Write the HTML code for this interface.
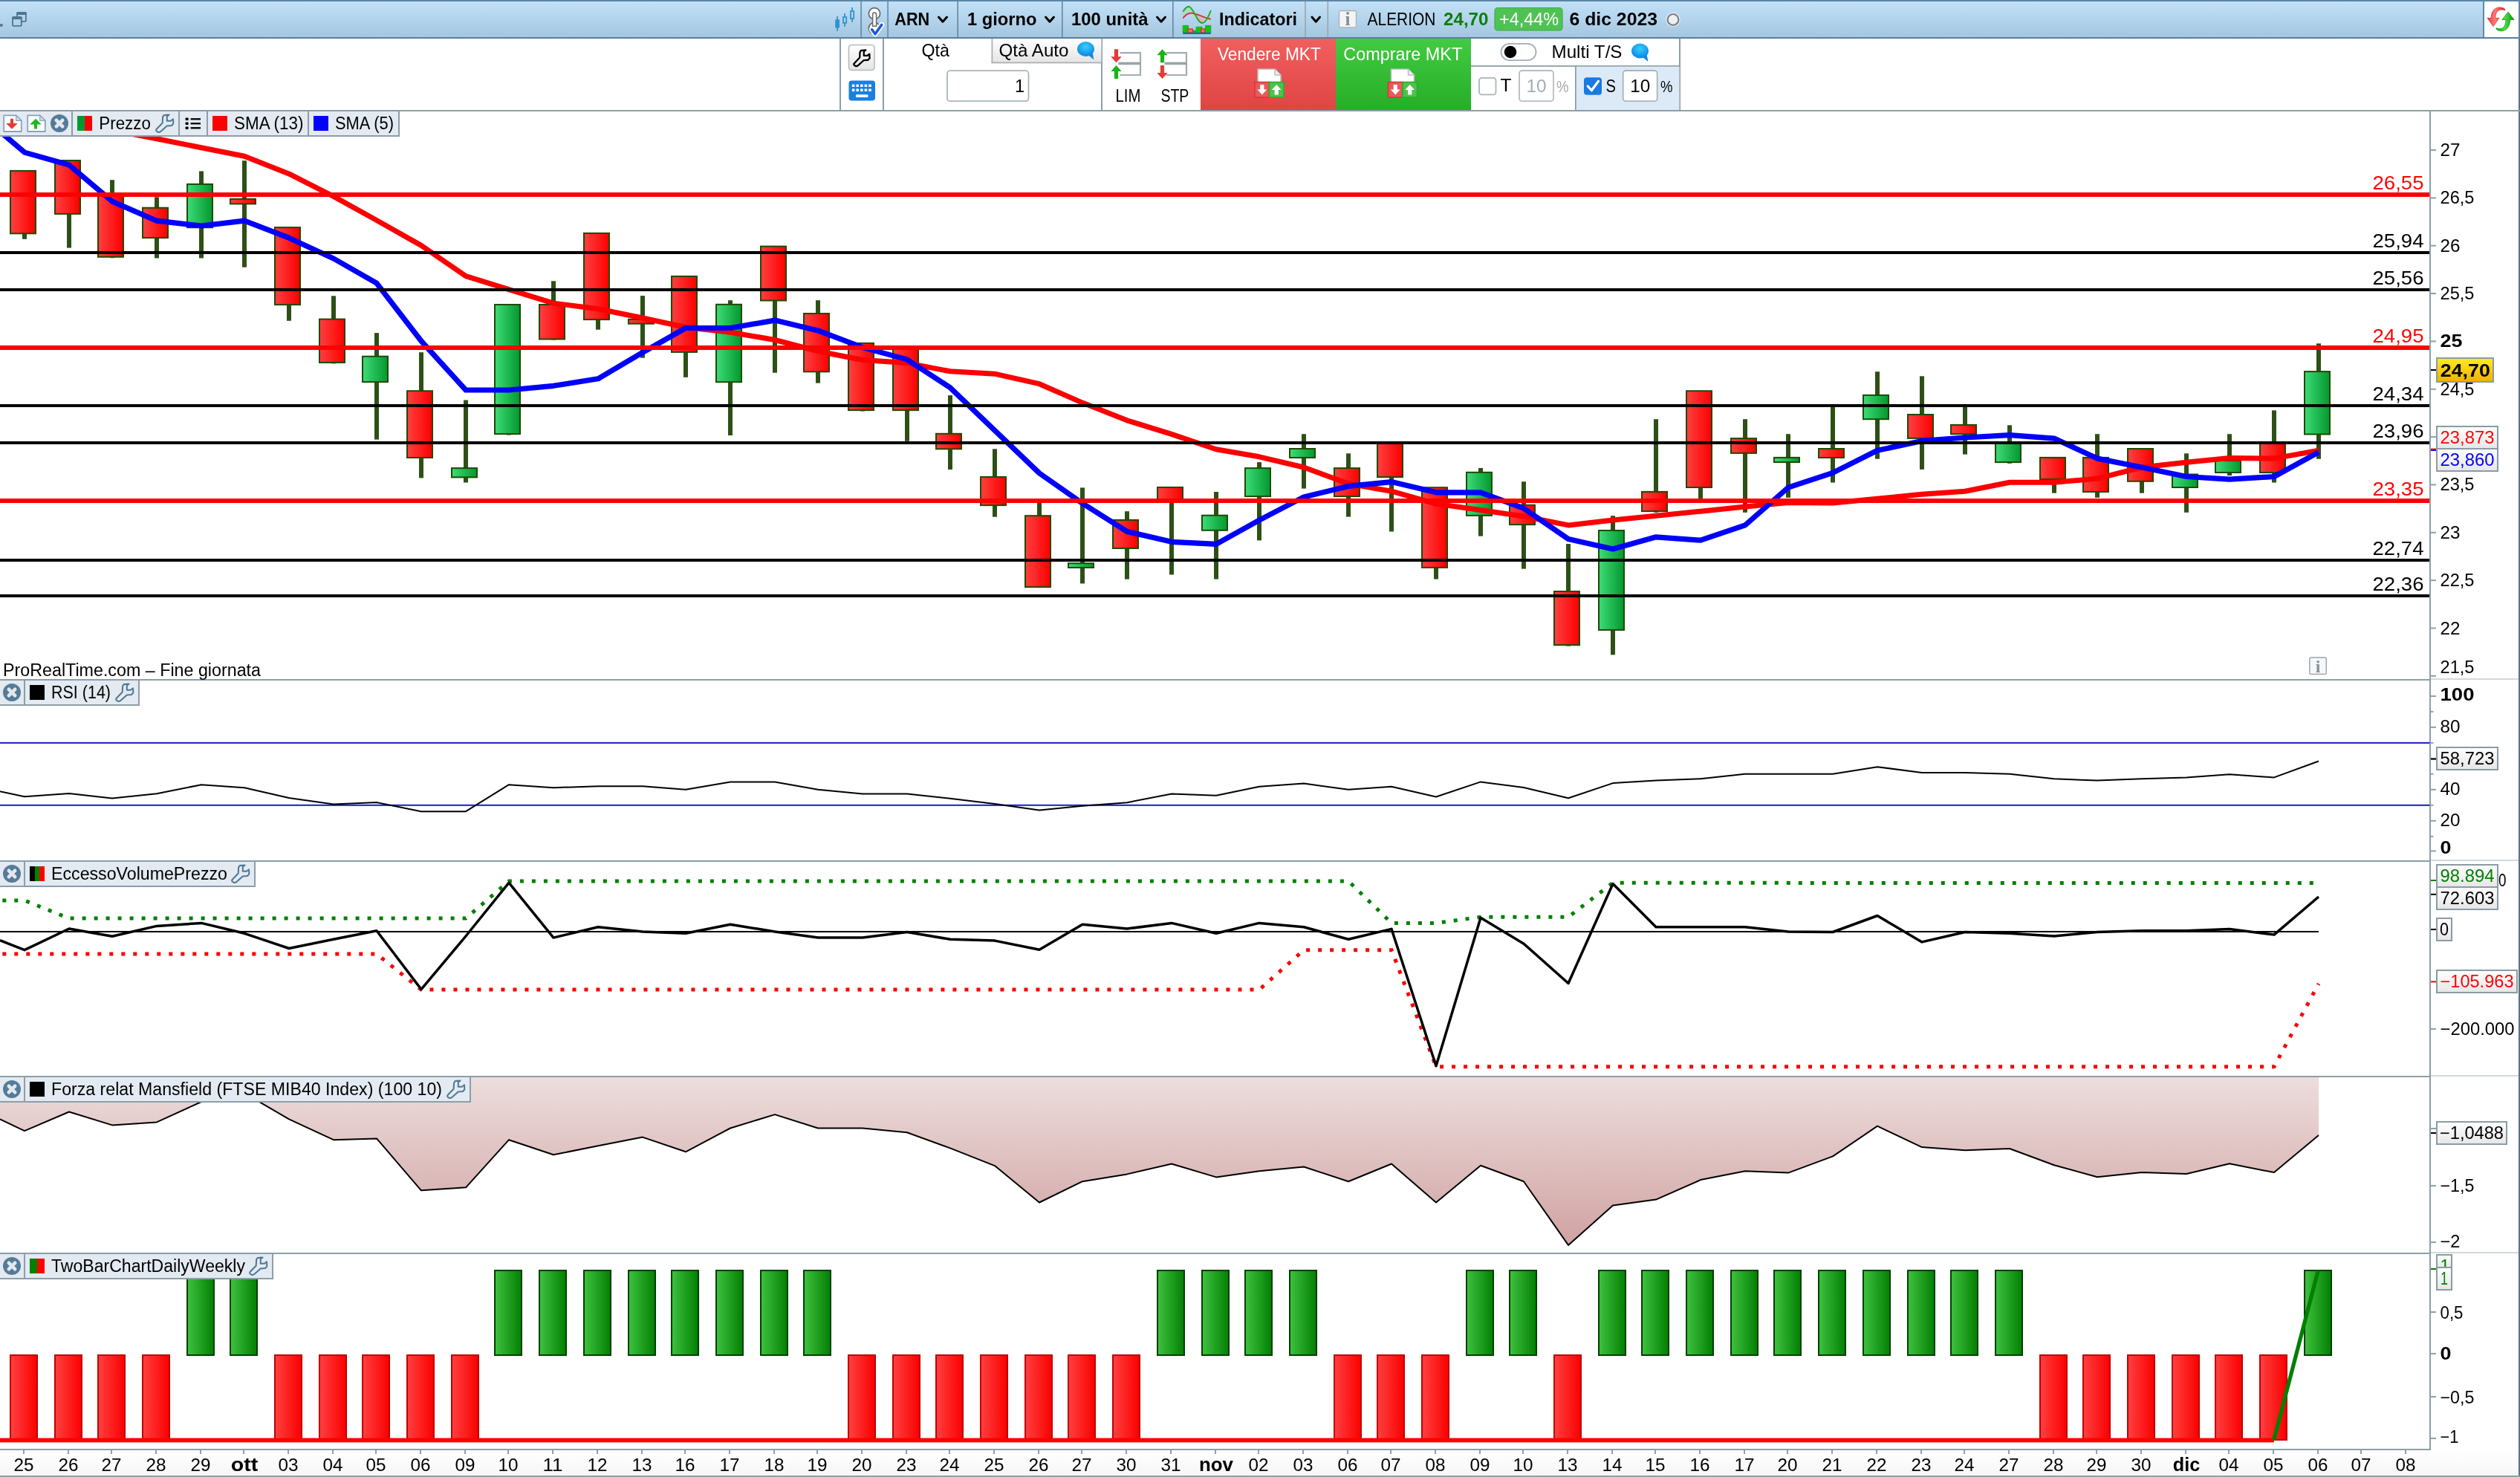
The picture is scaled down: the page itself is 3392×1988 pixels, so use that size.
<!DOCTYPE html>
<html><head><meta charset="utf-8"><title>ARN chart</title>
<style>html,body{margin:0;padding:0;background:#fff}body{width:3392px;height:1988px}svg{display:block;will-change:transform;opacity:0.9999}</style></head>
<body><svg width="3392" height="1988" viewBox="0 0 3392 1988" font-family="Liberation Sans, sans-serif">
<defs>
<linearGradient id="gTop" x1="0" y1="0" x2="0" y2="1"><stop offset="0" stop-color="#c3e2f9"/><stop offset="1" stop-color="#a3c5de"/></linearGradient>
<linearGradient id="gR" x1="0" y1="0" x2="1" y2="0"><stop offset="0" stop-color="#ff4040"/><stop offset="1" stop-color="#fc0000"/></linearGradient>
<linearGradient id="gG" x1="0" y1="0" x2="1" y2="0"><stop offset="0" stop-color="#3ddc78"/><stop offset="1" stop-color="#04972f"/></linearGradient>
<linearGradient id="gBR" x1="0" y1="0" x2="1" y2="0"><stop offset="0" stop-color="#ff4040"/><stop offset="1" stop-color="#fa0000"/></linearGradient>
<linearGradient id="gBG" x1="0" y1="0" x2="1" y2="0"><stop offset="0" stop-color="#3ec23e"/><stop offset="1" stop-color="#037f03"/></linearGradient>
<linearGradient id="gM" gradientUnits="userSpaceOnUse" x1="0" y1="1450" x2="0" y2="1686"><stop offset="0" stop-color="#ecdddd"/><stop offset="1" stop-color="#cfa09f"/></linearGradient>
<linearGradient id="gSell" x1="0" y1="0" x2="0" y2="1"><stop offset="0" stop-color="#f15f5f"/><stop offset="1" stop-color="#df4444"/></linearGradient>
<linearGradient id="gBuy" x1="0" y1="0" x2="0" y2="1"><stop offset="0" stop-color="#42cb42"/><stop offset="1" stop-color="#27ad27"/></linearGradient>
<linearGradient id="gGold" x1="0" y1="0" x2="0" y2="1"><stop offset="0" stop-color="#ffec20"/><stop offset="1" stop-color="#f0b000"/></linearGradient>
<linearGradient id="gLbl" x1="0" y1="0" x2="0" y2="1"><stop offset="0" stop-color="#ffffff"/><stop offset="1" stop-color="#e6e6e8"/></linearGradient>
<linearGradient id="gTab" x1="0" y1="0" x2="0" y2="1"><stop offset="0" stop-color="#ffffff"/><stop offset="1" stop-color="#e4e4e4"/></linearGradient>
<linearGradient id="gBot" x1="0" y1="0" x2="0" y2="1"><stop offset="0" stop-color="#ffffff"/><stop offset="1" stop-color="#f6f6f6"/></linearGradient>
<radialGradient id="gBub" cx="0.5" cy="0.35" r="0.7"><stop offset="0" stop-color="#35d0ff"/><stop offset="1" stop-color="#0a7fe0"/></radialGradient>
<clipPath id="cpMain"><rect x="0" y="150" width="3270" height="765"/></clipPath>
<clipPath id="cpM"><rect x="0" y="1450" width="3270" height="236"/></clipPath>
</defs>
<rect width="3392" height="1988" fill="#fff"/>
<rect x="0" y="0" width="3392" height="52" fill="url(#gTop)"/>
<rect x="0" y="0" width="3392" height="2" fill="#5e86a5"/>
<rect x="0" y="50" width="3392" height="2" fill="#587f9e"/>
<rect x="1158.3" y="2" width="1.6" height="48" fill="#6189a8"/>
<rect x="1194.3" y="2" width="1.6" height="48" fill="#6189a8"/>
<rect x="1288.4" y="2" width="1.6" height="48" fill="#6189a8"/>
<rect x="1429" y="2" width="1.6" height="48" fill="#6189a8"/>
<rect x="1578" y="2" width="1.6" height="48" fill="#6189a8"/>
<rect x="1756.2" y="2" width="1.6" height="48" fill="#9ba5ab"/>
<rect x="1786.5" y="2" width="1.6" height="48" fill="#9ba5ab"/>
<rect x="3342" y="2" width="2" height="48" fill="#6189a8"/>
<rect x="3344" y="2" width="46" height="48" fill="#fff"/>
<rect x="3390" y="0" width="2" height="1988" fill="#5f7283"/>
<rect x="3390" y="0" width="2" height="52" fill="#5e86a5"/>
<linearGradient id="gRA" x1="0" y1="0" x2="1" y2="0"><stop offset="0" stop-color="#f23c3c"/><stop offset="0.45" stop-color="#ff7878"/><stop offset="1" stop-color="#d82424"/></linearGradient><linearGradient id="gGA" x1="0" y1="0" x2="1" y2="0"><stop offset="0" stop-color="#10b810"/><stop offset="0.5" stop-color="#48e048"/><stop offset="1" stop-color="#089008"/></linearGradient>
<path d="M3353.1 24.3 C3353.3 15 3358 9.6 3365.5 9.9 C3368 10 3370.5 11 3371.9 12.6 L3371.8 13.8 C3369 12.8 3366.5 12.8 3364.5 13.4 C3360.5 14.8 3358.9 19 3358.8 24.3 L3363.8 24.3 L3356 35.6 L3348 24.3 Z" fill="url(#gRA)" stroke="#c02626" stroke-width="0.7"/>
<path d="M3378.7 26.5 C3378.5 36 3373.5 41.8 3366.5 41.8 C3364 41.7 3361.5 40.6 3359.9 39 L3360.1 37.8 C3362.8 38.8 3365.2 38.9 3367.3 38.3 C3371.2 37 3372.9 32 3373 26.5 L3367.9 26.5 L3376.1 16.1 L3384 26.5 Z" fill="url(#gGA)" stroke="#0a8a0a" stroke-width="0.7"/>
<rect x="-2" y="32.2" width="6" height="3.5" rx="1.7" fill="#4f7591"/>
<rect x="23.1" y="17" width="11.8" height="11.8" rx="1.6" fill="none" stroke="#4f7591" stroke-width="1.8"/><rect x="22.2" y="16.1" width="13.6" height="3.8" rx="1.4" fill="#4f7591"/>
<rect x="17" y="23.1" width="11.8" height="11.8" rx="1.6" fill="#b1d3ea" stroke="#4f7591" stroke-width="1.8"/><rect x="16.1" y="22.2" width="13.6" height="3.8" rx="1.4" fill="#4f7591"/>
<g fill="#3391cf" stroke="none"><rect x="1124.2" y="26.2" width="5.8" height="11.3"/><rect x="1126.2" y="22.1" width="1.8" height="19.6"/><rect x="1136.2" y="18.1" width="1.8" height="4.5"/><rect x="1136.2" y="31.2" width="1.8" height="4.6"/><rect x="1146.2" y="10" width="1.8" height="4.6"/><rect x="1146.2" y="25.4" width="1.8" height="4.4"/></g>
<g fill="none" stroke="#3391cf" stroke-width="1.8"><rect x="1135" y="23" width="4.2" height="7.8"/><rect x="1145" y="15" width="4.2" height="10"/></g>
<g stroke="#6d6d6d" stroke-width="1.8" fill="#fff"><circle cx="1177" cy="18.3" r="7.6"/><circle cx="1177" cy="38" r="7.6"/></g>
<path d="M1174.6 35.2 V19.5 a2.5 2.5 0 0 1 5 0 V35.2 Z" fill="#fff" stroke="#6d6d6d" stroke-width="1.6"/>
<path d="M1173.6 39.8 L1178 45.8 L1186.8 33.4" fill="none" stroke="#fff" stroke-width="7" stroke-linecap="round" stroke-linejoin="round"/>
<path d="M1173.6 39.8 L1178 45.8 L1186.8 33.4" fill="none" stroke="#1f5bd8" stroke-width="3.6" stroke-linecap="round" stroke-linejoin="round"/>
<text x="1204.3" y="33.9" font-size="24.6" font-weight="bold" fill="#000" text-anchor="start" textLength="47" lengthAdjust="spacingAndGlyphs" >ARN</text>
<path d="M1263.5 23 L1269.0 29.2 L1274.5 23" fill="none" stroke="#000" stroke-width="3" stroke-linecap="round" stroke-linejoin="round"/>
<text x="1301.9" y="33.9" font-size="24.6" font-weight="bold" fill="#000" text-anchor="start" textLength="93.5" lengthAdjust="spacingAndGlyphs" >1 giorno</text>
<path d="M1407.5 23 L1413.0 29.2 L1418.5 23" fill="none" stroke="#000" stroke-width="3" stroke-linecap="round" stroke-linejoin="round"/>
<text x="1442" y="33.9" font-size="24.6" font-weight="bold" fill="#000" text-anchor="start" textLength="103.5" lengthAdjust="spacingAndGlyphs" >100 unità</text>
<path d="M1557.5 23 L1563.0 29.2 L1568.5 23" fill="none" stroke="#000" stroke-width="3" stroke-linecap="round" stroke-linejoin="round"/>
<path d="M1592.2 15.7 C1595 11.5 1597.5 8.7 1600.1 8.7 C1606 8.7 1611 31 1618.4 31 C1622.5 31 1626.5 23 1629.8 14 L1629.8 25.8 C1620 23.5 1611 18.3 1604 17.6 C1600 17.2 1596 19.5 1592.2 24.5 Z" fill="#a9d9c4" opacity="0.9"/>
<path d="M1606.5 18 C1611 19 1616 22 1623.5 24.3 C1621.5 28 1620 31 1618.4 31 C1613.5 31 1610 22 1606.5 18 Z" fill="#d6b9c6"/>
<path d="M1592.2 24.5 C1596 19.5 1600 17.2 1604 17.6 C1611 18.3 1620 23.5 1629.8 25.8" fill="none" stroke="#d62b2b" stroke-width="1.8"/>
<path d="M1592.2 15.7 C1595 11.5 1597.5 8.7 1600.1 8.7 C1606 8.7 1611 31 1618.4 31 C1622.5 31 1626.5 23 1629.8 14" fill="none" stroke="#1cad1c" stroke-width="1.9"/>
<g><rect x="1592.2" y="34.3" width="7.4" height="9.6" fill="#08c808" stroke="#1aa81a" stroke-width="0.8"/><rect x="1604.5" y="40.6" width="6" height="3.3" fill="#12b012"/><rect x="1610.1" y="36.2" width="7.9" height="7.7" fill="#08c808" stroke="#1aa81a" stroke-width="0.8"/><rect x="1622.4" y="34.3" width="7.4" height="9.6" fill="#08c808" stroke="#1aa81a" stroke-width="0.8"/><rect x="1598.9" y="38.9" width="6.4" height="5" fill="#ff6a6a" stroke="#d82828" stroke-width="1.2"/><rect x="1616.8" y="38.9" width="5" height="5" fill="#ff6a6a" stroke="#d82828" stroke-width="1.2"/><rect x="1592.2" y="43.9" width="37.6" height="2" fill="#1a57d6"/></g>
<text x="1641" y="33.9" font-size="24.6" font-weight="bold" fill="#000" text-anchor="start" textLength="105" lengthAdjust="spacingAndGlyphs" >Indicatori</text>
<path d="M1766.0 23 L1771.25 29.2 L1776.5 23" fill="none" stroke="#000" stroke-width="3" stroke-linecap="round" stroke-linejoin="round"/>
<rect x="1802.5" y="14.5" width="23" height="22.5" rx="2" fill="#f4f4f4" stroke="#a9b4ba" stroke-width="1.4"/>
<text x="1814" y="33.8" font-size="25" font-weight="bold" fill="#868c93" text-anchor="middle" font-family="Liberation Serif, serif">i</text>
<text x="1840.5" y="33.9" font-size="24.6" fill="#000" text-anchor="start" textLength="92" lengthAdjust="spacingAndGlyphs" >ALERION</text>
<text x="1943" y="33.9" font-size="24.6" font-weight="bold" fill="#0d7d0d" text-anchor="start" textLength="60.5" lengthAdjust="spacingAndGlyphs" >24,70</text>
<rect x="2012" y="10.5" width="91" height="30.5" rx="4" fill="#4fc254" stroke="#3fae44" stroke-width="1.2"/>
<text x="2018" y="33.9" font-size="24.6" fill="#fff" text-anchor="start" textLength="80" lengthAdjust="spacingAndGlyphs" >+4,44%</text>
<text x="2112.5" y="33.9" font-size="24.6" font-weight="bold" fill="#000" text-anchor="start" textLength="118.5" lengthAdjust="spacingAndGlyphs" >6 dic 2023</text>
<circle cx="2252" cy="26.4" r="9.6" fill="#e9f1f8"/><circle cx="2252" cy="26.4" r="7.4" fill="#eaf0f6" stroke="#7f7f7f" stroke-width="2.2"/>
<rect x="0" y="148" width="3392" height="2" fill="#8d9ea6"/>
<rect x="1130" y="52" width="2" height="97" fill="#8d9ea6"/>
<rect x="1188" y="52" width="2" height="97" fill="#8d9ea6"/>
<rect x="1482" y="52" width="2" height="97" fill="#8d9ea6"/>
<rect x="2260" y="52" width="2" height="97" fill="#8d9ea6"/>
<rect x="1142.5" y="60.5" width="34.5" height="34" rx="4" fill="url(#gTab)" stroke="#b3bcc1" stroke-width="1.6"/>
<g transform="translate(1160.2 78) scale(0.92) translate(-12 -12)"><path d="M0.8 19.8 L8.7 11.5 L9.1 3.4 L10.9 0.9 L17.5 0.6 L14.8 2.4 L14.8 8.7 L19.8 8.7 L23 6.3 L23.3 12.3 L21 15 L14.7 15.4 L6.3 23 Q3.6 25 1.3 23 Q-0.8 21.4 0.8 19.8 Z" fill="none" stroke="#000" stroke-width="2.5" stroke-linejoin="round"/></g>
<rect x="1142.5" y="108.5" width="35.5" height="27" rx="4" fill="#197fe3"/>
<rect x="1146.8" y="113.5" width="3.6" height="3.6" rx="0.6" fill="#fff"/>
<rect x="1152.3999999999999" y="113.5" width="3.6" height="3.6" rx="0.6" fill="#fff"/>
<rect x="1158.0" y="113.5" width="3.6" height="3.6" rx="0.6" fill="#fff"/>
<rect x="1163.6" y="113.5" width="3.6" height="3.6" rx="0.6" fill="#fff"/>
<rect x="1169.2" y="113.5" width="3.6" height="3.6" rx="0.6" fill="#fff"/>
<rect x="1146.8" y="119.5" width="3.6" height="3.6" rx="0.6" fill="#fff"/>
<rect x="1152.3999999999999" y="119.5" width="3.6" height="3.6" rx="0.6" fill="#fff"/>
<rect x="1158.0" y="119.5" width="3.6" height="3.6" rx="0.6" fill="#fff"/>
<rect x="1163.6" y="119.5" width="3.6" height="3.6" rx="0.6" fill="#fff"/>
<rect x="1169.2" y="119.5" width="3.6" height="3.6" rx="0.6" fill="#fff"/>
<rect x="1152" y="127.3" width="16.5" height="3.6" rx="0.8" fill="#fff"/>
<text x="1240.5" y="76" font-size="24.3" fill="#000" text-anchor="start" textLength="37.5" lengthAdjust="spacingAndGlyphs" >Qtà</text>
<rect x="1335.5" y="52" width="147" height="32.5" fill="url(#gTab)"/>
<rect x="1334.5" y="52" width="1.8" height="33" fill="#a9b2b7"/><rect x="1334.5" y="83.5" width="148" height="1.8" fill="#a9b2b7"/>
<text x="1344.5" y="76" font-size="24.3" fill="#000" text-anchor="start" textLength="94" lengthAdjust="spacingAndGlyphs" >Qtà Auto</text>
<path d="M1465.525 74.625 L1472.425 80.375 L1470.7 71.175 Z" fill="#0f86e6"/>
<ellipse cx="1461.5" cy="66" rx="11.5" ry="9.89" fill="url(#gBub)"/>
<rect x="1275" y="95.2" width="109.5" height="41" rx="4" fill="#fff" stroke="#a9b4ba" stroke-width="1.8"/>
<text x="1379" y="124" font-size="23.5" fill="#000" text-anchor="end" >1</text>
<path d="M1507.5 71.2 H1535.0 V101 H1507.5 M1507.5 85.3 H1535.0" fill="none" stroke="#a2adb3" stroke-width="2.2"/>
<rect x="1505.5" y="83.6" width="30.5" height="3.6" fill="#98a4aa"/>
<path d="M1499.9 66.2 H1505.1 V76.2 H1509.7 L1502.5 84.2 L1495.3 76.2 H1499.9 Z" fill="#e43a3a"/>
<path d="M1502.5 88 L1509.7 96 H1505.1 V106 H1499.9 V96 H1495.3 Z" fill="#16b416"/>
<path d="M1569.5 71.2 H1597.0 V101 H1569.5 M1569.5 85.3 H1597.0" fill="none" stroke="#a2adb3" stroke-width="2.2"/>
<rect x="1567.5" y="83.6" width="30.5" height="3.6" fill="#98a4aa"/>
<path d="M1564.5 66.2 L1571.7 74.2 H1567.1 V84.2 H1561.9 V74.2 H1557.3 Z" fill="#16b416"/>
<path d="M1561.9 88 H1567.1 V98 H1571.7 L1564.5 106 L1557.3 98 H1561.9 Z" fill="#e43a3a"/>
<text x="1501.5" y="137.3" font-size="23" fill="#000" text-anchor="start" textLength="34" lengthAdjust="spacingAndGlyphs" >LIM</text>
<text x="1562.4" y="137.3" font-size="23" fill="#000" text-anchor="start" textLength="38" lengthAdjust="spacingAndGlyphs" >STP</text>
<rect x="1616" y="52" width="182" height="96" fill="url(#gSell)"/>
<rect x="1798" y="52" width="182" height="96" fill="url(#gBuy)"/>
<text x="1638.9" y="80.5" font-size="24.8" fill="#fff" text-anchor="start" textLength="139" lengthAdjust="spacingAndGlyphs" >Vendere MKT</text>
<text x="1808.3" y="80.5" font-size="24.8" fill="#fff" text-anchor="start" textLength="160" lengthAdjust="spacingAndGlyphs" >Comprare MKT</text>
<path d="M1693 93 H1716 L1724 101 V116 H1693 Z" fill="#fff" stroke="#b6bcc2" stroke-width="1.6"/>
<path d="M1716 93 V101 H1724" fill="#e9edf0" stroke="#b6bcc2" stroke-width="1.4"/>
<rect x="1689" y="110.5" width="19.5" height="20.5" fill="#e85a5a" stroke="#e03535" stroke-width="1.6"/>
<rect x="1708.5" y="110.5" width="19.5" height="20.5" fill="#4cc24c" stroke="#27b027" stroke-width="1.6"/>
<path d="M1696.2 114 H1701.4 V120.5 H1705.2 L1698.8 127.5 L1692.4 120.5 H1696.2 Z" fill="#fff"/>
<path d="M1718.2 114 L1724.6 121 H1720.8 V127.5 H1715.6 V121 H1711.8 Z" fill="#fff"/>
<path d="M1872.5 93 H1895.5 L1903.5 101 V116 H1872.5 Z" fill="#fff" stroke="#b6bcc2" stroke-width="1.6"/>
<path d="M1895.5 93 V101 H1903.5" fill="#e9edf0" stroke="#b6bcc2" stroke-width="1.4"/>
<rect x="1868.5" y="110.5" width="19.5" height="20.5" fill="#e85a5a" stroke="#e03535" stroke-width="1.6"/>
<rect x="1888.0" y="110.5" width="19.5" height="20.5" fill="#4cc24c" stroke="#27b027" stroke-width="1.6"/>
<path d="M1875.7 114 H1880.9 V120.5 H1884.7 L1878.3 127.5 L1871.9 120.5 H1875.7 Z" fill="#fff"/>
<path d="M1897.7 114 L1904.1 121 H1900.3 V127.5 H1895.1 V121 H1891.3 Z" fill="#fff"/>
<rect x="1980" y="88" width="281" height="1.8" fill="#8d9ea6"/>
<rect x="2121.5" y="89.8" width="139" height="58.2" fill="#dceaf8"/>
<rect x="2120" y="89" width="1.8" height="59" fill="#8d9ea6"/>
<rect x="2020.5" y="58.8" width="47" height="22.4" rx="11.2" fill="#fff" stroke="#a3aeb4" stroke-width="1.8"/>
<circle cx="2033" cy="70" r="8.3" fill="#000"/>
<text x="2088.5" y="78" font-size="24.3" fill="#000" text-anchor="start" textLength="95" lengthAdjust="spacingAndGlyphs" >Multi T/S</text>
<path d="M2211.525 77.125 L2218.425 82.875 L2216.7 73.675 Z" fill="#0f86e6"/>
<ellipse cx="2207.5" cy="68.5" rx="11.5" ry="9.89" fill="url(#gBub)"/>
<rect x="1991" y="104.8" width="22.5" height="22.5" rx="3.5" fill="#fff" stroke="#a9b4ba" stroke-width="1.8"/>
<text x="2019.5" y="123.2" font-size="23.5" fill="#000" text-anchor="start" textLength="15" lengthAdjust="spacingAndGlyphs" >T</text>
<rect x="2045" y="95" width="46" height="41.2" rx="4" fill="#fff" stroke="#b4bdc2" stroke-width="1.8"/>
<text x="2068" y="124.2" font-size="23" fill="#a3adb3" text-anchor="middle" textLength="27" lengthAdjust="spacingAndGlyphs" >10</text>
<text x="2095" y="124.2" font-size="22" fill="#a9a9a9" text-anchor="start" textLength="16.5" lengthAdjust="spacingAndGlyphs" >%</text>
<rect x="2132" y="104.3" width="24" height="23.5" rx="4" fill="#1a79e2"/>
<path d="M2137.2 116 L2142.3 121.7 L2151.5 109.2" fill="none" stroke="#fff" stroke-width="3.2" stroke-linecap="round" stroke-linejoin="round"/>
<text x="2161.5" y="123.8" font-size="24" fill="#000" text-anchor="start" textLength="13.5" lengthAdjust="spacingAndGlyphs" >S</text>
<rect x="2184.7" y="95" width="46" height="41.2" rx="4" fill="#fff" stroke="#a9b4ba" stroke-width="1.8"/>
<text x="2207.7" y="124.2" font-size="23" fill="#000" text-anchor="middle" textLength="27" lengthAdjust="spacingAndGlyphs" >10</text>
<text x="2235" y="124.2" font-size="22" fill="#000" text-anchor="start" textLength="16.5" lengthAdjust="spacingAndGlyphs" >%</text>
<rect x="0" y="914" width="3272" height="2" fill="#8d9ea6"/>
<rect x="3272" y="913" width="118" height="2" fill="#d2d9dd"/>
<rect x="0" y="1158" width="3272" height="2" fill="#8d9ea6"/>
<rect x="3272" y="1157" width="118" height="2" fill="#d2d9dd"/>
<rect x="0" y="1448" width="3272" height="2" fill="#8d9ea6"/>
<rect x="3272" y="1447" width="118" height="2" fill="#d2d9dd"/>
<rect x="0" y="1686" width="3272" height="2" fill="#8d9ea6"/>
<rect x="3272" y="1685" width="118" height="2" fill="#d2d9dd"/>
<rect x="0" y="1952" width="3390" height="34" fill="url(#gBot)"/>
<rect x="0" y="1950" width="3272" height="2" fill="#8d9ea6"/>
<rect x="0" y="1986" width="3392" height="2" fill="#8d9ea6"/>
<rect x="3270" y="150" width="2" height="1802" fill="#8d9ea6"/>
<g clip-path="url(#cpMain)">
<rect x="30.0" y="229.7" width="6" height="92.1" fill="#2d5016"/>
<rect x="14.0" y="229.9" width="34" height="84.4" fill="url(#gR)" stroke="#1f4a02" stroke-width="2"/>
<rect x="90.0" y="215.8" width="6" height="117.8" fill="#2d5016"/>
<rect x="74.0" y="216.0" width="34" height="71.9" fill="url(#gR)" stroke="#1f4a02" stroke-width="2"/>
<rect x="148.0" y="242.2" width="6" height="105.0" fill="#2d5016"/>
<rect x="132.0" y="263.8" width="34" height="82.0" fill="url(#gR)" stroke="#1f4a02" stroke-width="2"/>
<rect x="208.0" y="265.3" width="6" height="82.2" fill="#2d5016"/>
<rect x="192.0" y="279.7" width="34" height="40.4" fill="url(#gR)" stroke="#1f4a02" stroke-width="2"/>
<rect x="268.0" y="230.4" width="6" height="117.1" fill="#2d5016"/>
<rect x="252.0" y="247.9" width="34" height="58.3" fill="url(#gG)" stroke="#1f4a02" stroke-width="2"/>
<rect x="326.0" y="216.2" width="6" height="143.5" fill="#2d5016"/>
<rect x="310.0" y="267.8" width="34" height="6.6" fill="url(#gR)" stroke="#1f4a02" stroke-width="2"/>
<rect x="386.0" y="305.9" width="6" height="125.9" fill="#2d5016"/>
<rect x="370.0" y="306.1" width="34" height="104.0" fill="url(#gR)" stroke="#1f4a02" stroke-width="2"/>
<rect x="446.0" y="398.3" width="6" height="91.1" fill="#2d5016"/>
<rect x="430.0" y="429.6" width="34" height="58.4" fill="url(#gR)" stroke="#1f4a02" stroke-width="2"/>
<rect x="504.0" y="448.1" width="6" height="143.5" fill="#2d5016"/>
<rect x="488.0" y="479.7" width="34" height="34.4" fill="url(#gG)" stroke="#1f4a02" stroke-width="2"/>
<rect x="564.0" y="474.2" width="6" height="169.2" fill="#2d5016"/>
<rect x="548.0" y="526.2" width="34" height="89.8" fill="url(#gR)" stroke="#1f4a02" stroke-width="2"/>
<rect x="624.0" y="538.5" width="6" height="111.0" fill="#2d5016"/>
<rect x="608.0" y="630.1" width="34" height="12.3" fill="url(#gG)" stroke="#1f4a02" stroke-width="2"/>
<rect x="682.0" y="409.8" width="6" height="175.7" fill="#2d5016"/>
<rect x="666.0" y="410.0" width="34" height="174.1" fill="url(#gG)" stroke="#1f4a02" stroke-width="2"/>
<rect x="742.0" y="378.3" width="6" height="79.2" fill="#2d5016"/>
<rect x="726.0" y="410.0" width="34" height="46.5" fill="url(#gR)" stroke="#1f4a02" stroke-width="2"/>
<rect x="802.0" y="313.7" width="6" height="130.0" fill="#2d5016"/>
<rect x="786.0" y="313.9" width="34" height="116.2" fill="url(#gR)" stroke="#1f4a02" stroke-width="2"/>
<rect x="862.0" y="398.1" width="6" height="83.6" fill="#2d5016"/>
<rect x="846.0" y="429.8" width="34" height="5.9" fill="url(#gR)" stroke="#1f4a02" stroke-width="2"/>
<rect x="920.0" y="371.7" width="6" height="136.1" fill="#2d5016"/>
<rect x="904.0" y="371.9" width="34" height="102.0" fill="url(#gR)" stroke="#1f4a02" stroke-width="2"/>
<rect x="980.0" y="404.2" width="6" height="181.8" fill="#2d5016"/>
<rect x="964.0" y="409.8" width="34" height="104.4" fill="url(#gG)" stroke="#1f4a02" stroke-width="2"/>
<rect x="1040.0" y="331.4" width="6" height="170.3" fill="#2d5016"/>
<rect x="1024.0" y="331.6" width="34" height="72.9" fill="url(#gR)" stroke="#1f4a02" stroke-width="2"/>
<rect x="1098.0" y="404.2" width="6" height="111.4" fill="#2d5016"/>
<rect x="1082.0" y="422.0" width="34" height="78.3" fill="url(#gR)" stroke="#1f4a02" stroke-width="2"/>
<rect x="1158.0" y="461.7" width="6" height="91.8" fill="#2d5016"/>
<rect x="1142.0" y="461.9" width="34" height="90.2" fill="url(#gR)" stroke="#1f4a02" stroke-width="2"/>
<rect x="1218.0" y="468.2" width="6" height="125.6" fill="#2d5016"/>
<rect x="1202.0" y="468.4" width="34" height="83.7" fill="url(#gR)" stroke="#1f4a02" stroke-width="2"/>
<rect x="1276.0" y="532.1" width="6" height="99.9" fill="#2d5016"/>
<rect x="1260.0" y="583.8" width="34" height="20.5" fill="url(#gR)" stroke="#1f4a02" stroke-width="2"/>
<rect x="1336.0" y="604.3" width="6" height="91.4" fill="#2d5016"/>
<rect x="1320.0" y="642.0" width="34" height="38.1" fill="url(#gR)" stroke="#1f4a02" stroke-width="2"/>
<rect x="1396.0" y="676.0" width="6" height="115.1" fill="#2d5016"/>
<rect x="1380.0" y="694.2" width="34" height="95.9" fill="url(#gR)" stroke="#1f4a02" stroke-width="2"/>
<rect x="1454.0" y="656.4" width="6" height="129.0" fill="#2d5016"/>
<rect x="1438.0" y="758.2" width="34" height="5.8" fill="url(#gG)" stroke="#1f4a02" stroke-width="2"/>
<rect x="1514.0" y="688.2" width="6" height="91.4" fill="#2d5016"/>
<rect x="1498.0" y="699.9" width="34" height="38.1" fill="url(#gR)" stroke="#1f4a02" stroke-width="2"/>
<rect x="1574.0" y="655.7" width="6" height="117.8" fill="#2d5016"/>
<rect x="1558.0" y="655.9" width="34" height="20.1" fill="url(#gR)" stroke="#1f4a02" stroke-width="2"/>
<rect x="1634.0" y="662.0" width="6" height="117.5" fill="#2d5016"/>
<rect x="1618.0" y="693.7" width="34" height="20.1" fill="url(#gG)" stroke="#1f4a02" stroke-width="2"/>
<rect x="1692.0" y="622.1" width="6" height="105.3" fill="#2d5016"/>
<rect x="1676.0" y="630.1" width="34" height="38.0" fill="url(#gG)" stroke="#1f4a02" stroke-width="2"/>
<rect x="1752.0" y="584.2" width="6" height="73.4" fill="#2d5016"/>
<rect x="1736.0" y="604.0" width="34" height="12.0" fill="url(#gG)" stroke="#1f4a02" stroke-width="2"/>
<rect x="1812.0" y="610.3" width="6" height="85.3" fill="#2d5016"/>
<rect x="1796.0" y="630.1" width="34" height="38.0" fill="url(#gR)" stroke="#1f4a02" stroke-width="2"/>
<rect x="1870.0" y="596.0" width="6" height="119.5" fill="#2d5016"/>
<rect x="1854.0" y="596.2" width="34" height="45.9" fill="url(#gR)" stroke="#1f4a02" stroke-width="2"/>
<rect x="1930.0" y="656.0" width="6" height="123.5" fill="#2d5016"/>
<rect x="1914.0" y="656.2" width="34" height="107.7" fill="url(#gR)" stroke="#1f4a02" stroke-width="2"/>
<rect x="1990.0" y="629.9" width="6" height="91.7" fill="#2d5016"/>
<rect x="1974.0" y="635.8" width="34" height="58.1" fill="url(#gG)" stroke="#1f4a02" stroke-width="2"/>
<rect x="2048.0" y="648.2" width="6" height="117.4" fill="#2d5016"/>
<rect x="2032.0" y="679.8" width="34" height="26.3" fill="url(#gR)" stroke="#1f4a02" stroke-width="2"/>
<rect x="2108.0" y="732.1" width="6" height="137.5" fill="#2d5016"/>
<rect x="2092.0" y="796.0" width="34" height="72.2" fill="url(#gR)" stroke="#1f4a02" stroke-width="2"/>
<rect x="2168.0" y="694.2" width="6" height="187.2" fill="#2d5016"/>
<rect x="2152.0" y="714.0" width="34" height="133.9" fill="url(#gG)" stroke="#1f4a02" stroke-width="2"/>
<rect x="2226.0" y="564.2" width="6" height="125.6" fill="#2d5016"/>
<rect x="2210.0" y="661.9" width="34" height="26.2" fill="url(#gR)" stroke="#1f4a02" stroke-width="2"/>
<rect x="2286.0" y="526.0" width="6" height="146.2" fill="#2d5016"/>
<rect x="2270.0" y="526.2" width="34" height="129.8" fill="url(#gR)" stroke="#1f4a02" stroke-width="2"/>
<rect x="2346.0" y="564.2" width="6" height="125.6" fill="#2d5016"/>
<rect x="2330.0" y="590.1" width="34" height="19.8" fill="url(#gR)" stroke="#1f4a02" stroke-width="2"/>
<rect x="2404.0" y="584.2" width="6" height="85.6" fill="#2d5016"/>
<rect x="2388.0" y="615.9" width="34" height="6.2" fill="url(#gG)" stroke="#1f4a02" stroke-width="2"/>
<rect x="2464.0" y="546.9" width="6" height="102.6" fill="#2d5016"/>
<rect x="2448.0" y="604.0" width="34" height="12.0" fill="url(#gR)" stroke="#1f4a02" stroke-width="2"/>
<rect x="2524.0" y="500.2" width="6" height="117.5" fill="#2d5016"/>
<rect x="2508.0" y="531.9" width="34" height="32.3" fill="url(#gG)" stroke="#1f4a02" stroke-width="2"/>
<rect x="2584.0" y="506.3" width="6" height="125.6" fill="#2d5016"/>
<rect x="2568.0" y="558.0" width="34" height="31.9" fill="url(#gR)" stroke="#1f4a02" stroke-width="2"/>
<rect x="2642.0" y="546.9" width="6" height="64.7" fill="#2d5016"/>
<rect x="2626.0" y="571.9" width="34" height="12.3" fill="url(#gR)" stroke="#1f4a02" stroke-width="2"/>
<rect x="2702.0" y="572.3" width="6" height="51.5" fill="#2d5016"/>
<rect x="2686.0" y="595.6" width="34" height="26.5" fill="url(#gG)" stroke="#1f4a02" stroke-width="2"/>
<rect x="2762.0" y="615.7" width="6" height="48.0" fill="#2d5016"/>
<rect x="2746.0" y="615.9" width="34" height="29.2" fill="url(#gR)" stroke="#1f4a02" stroke-width="2"/>
<rect x="2820.0" y="584.2" width="6" height="85.6" fill="#2d5016"/>
<rect x="2804.0" y="615.9" width="34" height="46.1" fill="url(#gR)" stroke="#1f4a02" stroke-width="2"/>
<rect x="2880.0" y="603.8" width="6" height="59.9" fill="#2d5016"/>
<rect x="2864.0" y="604.0" width="34" height="43.8" fill="url(#gR)" stroke="#1f4a02" stroke-width="2"/>
<rect x="2940.0" y="610.3" width="6" height="79.5" fill="#2d5016"/>
<rect x="2924.0" y="638.5" width="34" height="17.5" fill="url(#gG)" stroke="#1f4a02" stroke-width="2"/>
<rect x="2998.0" y="584.2" width="6" height="55.8" fill="#2d5016"/>
<rect x="2982.0" y="619.9" width="34" height="16.1" fill="url(#gG)" stroke="#1f4a02" stroke-width="2"/>
<rect x="3058.0" y="552.4" width="6" height="97.1" fill="#2d5016"/>
<rect x="3042.0" y="596.2" width="34" height="39.8" fill="url(#gR)" stroke="#1f4a02" stroke-width="2"/>
<rect x="3118.0" y="462.3" width="6" height="155.4" fill="#2d5016"/>
<rect x="3102.0" y="500.1" width="34" height="84.4" fill="url(#gG)" stroke="#1f4a02" stroke-width="2"/>
<polyline points="-30.5,141.4 33.0,154.3 93.0,165.5 151.0,175.3 211.0,186.8 271.0,198.7 329.0,210.2 389.0,233.9 449.0,264.4 507.0,296.5 567.0,330.4 627.0,371.7 685.0,389.6 745.0,408.2 805.0,415.7 865.0,428.0 923.0,440.5 983.0,447.3 1043.0,457.5 1101.0,472.7 1161.0,484.5 1221.0,488.6 1279.0,499.8 1339.0,503.2 1399.0,516.7 1457.0,542.1 1517.0,565.8 1577.0,584.4 1637.0,604.7 1695.0,614.8 1755.0,629.0 1815.0,651.0 1873.0,661.2 1933.0,678.1 1993.0,686.5 2051.0,695.0 2111.0,706.9 2171.0,700.1 2229.0,694.3 2289.0,688.2 2349.0,682.1 2407.0,676.4 2467.0,677.1 2527.0,671.3 2587.0,665.2 2645.0,661.2 2705.0,649.3 2765.0,649.3 2823.0,644.2 2883.0,629.0 2943.0,622.2 3001.0,616.5 3061.0,617.1 3121.0,606.3" fill="none" stroke="#fb0000" stroke-width="7" stroke-linejoin="round" />
<polyline points="-30.5,147.4 0.0,176.9 33.0,205.1 93.0,222.0 151.0,271.1 211.0,297.2 271.0,304.0 329.0,297.2 389.0,320.2 449.0,348.0 507.0,381.2 567.0,459.0 627.0,525.0 685.0,525.0 745.0,519.3 805.0,509.8 865.0,474.4 923.0,441.5 983.0,441.5 1043.0,431.1 1101.0,444.9 1161.0,467.6 1221.0,483.9 1279.0,521.8 1339.0,579.3 1399.0,636.9 1457.0,677.5 1517.0,715.4 1577.0,729.3 1637.0,732.3 1695.0,700.1 1755.0,668.9 1815.0,654.4 1873.0,648.6 1933.0,662.8 1993.0,662.8 2051.0,684.2 2111.0,725.5 2171.0,739.0 2229.0,722.8 2289.0,727.2 2349.0,706.9 2407.0,656.1 2467.0,636.4 2527.0,606.3 2587.0,593.4 2645.0,589.0 2705.0,585.7 2765.0,590.1 2823.0,617.1 2883.0,629.0 2943.0,641.5 3001.0,645.2 3061.0,641.5 3121.0,608.7" fill="none" stroke="#0000fb" stroke-width="7.2" stroke-linejoin="round" />
<rect x="0" y="259.0" width="3270" height="6" fill="#fb0000"/>
<rect x="0" y="338.0" width="3270" height="4" fill="#000"/>
<rect x="0" y="388.0" width="3270" height="4" fill="#000"/>
<rect x="0" y="465.0" width="3270" height="6" fill="#fb0000"/>
<rect x="0" y="544.0" width="3270" height="4" fill="#000"/>
<rect x="0" y="594.0" width="3270" height="4" fill="#000"/>
<rect x="0" y="671.0" width="3270" height="6" fill="#fb0000"/>
<rect x="0" y="752.0" width="3270" height="4" fill="#000"/>
<rect x="0" y="800.0" width="3270" height="4" fill="#000"/>
</g>
<text x="3262.5" y="255.2" font-size="25" fill="#fa0505" text-anchor="end" textLength="69" lengthAdjust="spacingAndGlyphs" >26,55</text>
<text x="3262.5" y="333.2" font-size="25" fill="#000" text-anchor="end" textLength="69" lengthAdjust="spacingAndGlyphs" >25,94</text>
<text x="3262.5" y="383.2" font-size="25" fill="#000" text-anchor="end" textLength="69" lengthAdjust="spacingAndGlyphs" >25,56</text>
<text x="3262.5" y="461.2" font-size="25" fill="#fa0505" text-anchor="end" textLength="69" lengthAdjust="spacingAndGlyphs" >24,95</text>
<text x="3262.5" y="539.2" font-size="25" fill="#000" text-anchor="end" textLength="69" lengthAdjust="spacingAndGlyphs" >24,34</text>
<text x="3262.5" y="589.2" font-size="25" fill="#000" text-anchor="end" textLength="69" lengthAdjust="spacingAndGlyphs" >23,96</text>
<text x="3262.5" y="667.2" font-size="25" fill="#fa0505" text-anchor="end" textLength="69" lengthAdjust="spacingAndGlyphs" >23,35</text>
<text x="3262.5" y="747.2" font-size="25" fill="#000" text-anchor="end" textLength="69" lengthAdjust="spacingAndGlyphs" >22,74</text>
<text x="3262.5" y="795.2" font-size="25" fill="#000" text-anchor="end" textLength="69" lengthAdjust="spacingAndGlyphs" >22,36</text>
<text x="4" y="909.5" font-size="23" fill="#000" text-anchor="start" textLength="347" lengthAdjust="spacingAndGlyphs" >ProRealTime.com – Fine giornata</text>
<rect x="3108.8" y="885" width="22.5" height="22.5" rx="2" fill="#f6f7f8" stroke="#9aa8b0" stroke-width="1.5"/>
<text x="3120" y="904.5" font-size="24" font-weight="bold" fill="#8a9299" text-anchor="middle" font-family="Liberation Serif, serif">i</text>
<rect x="3272" y="201.0" width="7" height="2" fill="#8fa1a9"/>
<text x="3284.5" y="210.0" font-size="23" fill="#000" text-anchor="start" textLength="27" lengthAdjust="spacingAndGlyphs" >27</text>
<rect x="3272" y="265.4" width="7" height="2" fill="#8fa1a9"/>
<text x="3284.5" y="274.35" font-size="23" fill="#000" text-anchor="start" textLength="46" lengthAdjust="spacingAndGlyphs" >26,5</text>
<rect x="3272" y="329.7" width="7" height="2" fill="#8fa1a9"/>
<text x="3284.5" y="338.7" font-size="23" fill="#000" text-anchor="start" textLength="27" lengthAdjust="spacingAndGlyphs" >26</text>
<rect x="3272" y="394.0" width="7" height="2" fill="#8fa1a9"/>
<text x="3284.5" y="403.04999999999995" font-size="23" fill="#000" text-anchor="start" textLength="46" lengthAdjust="spacingAndGlyphs" >25,5</text>
<rect x="3272" y="458.4" width="7" height="2" fill="#8fa1a9"/>
<text x="3284.5" y="467.4" font-size="23" font-weight="bold" fill="#000" text-anchor="start" textLength="30" lengthAdjust="spacingAndGlyphs" >25</text>
<rect x="3272" y="522.8" width="7" height="2" fill="#8fa1a9"/>
<text x="3284.5" y="531.75" font-size="23" fill="#000" text-anchor="start" textLength="46" lengthAdjust="spacingAndGlyphs" >24,5</text>
<rect x="3272" y="587.1" width="7" height="2" fill="#8fa1a9"/>
<rect x="3272" y="651.4" width="7" height="2" fill="#8fa1a9"/>
<text x="3284.5" y="660.4499999999999" font-size="23" fill="#000" text-anchor="start" textLength="46" lengthAdjust="spacingAndGlyphs" >23,5</text>
<rect x="3272" y="715.8" width="7" height="2" fill="#8fa1a9"/>
<text x="3284.5" y="724.8" font-size="23" fill="#000" text-anchor="start" textLength="27" lengthAdjust="spacingAndGlyphs" >23</text>
<rect x="3272" y="780.1" width="7" height="2" fill="#8fa1a9"/>
<text x="3284.5" y="789.15" font-size="23" fill="#000" text-anchor="start" textLength="46" lengthAdjust="spacingAndGlyphs" >22,5</text>
<rect x="3272" y="844.5" width="7" height="2" fill="#8fa1a9"/>
<text x="3284.5" y="853.5" font-size="23" fill="#000" text-anchor="start" textLength="27" lengthAdjust="spacingAndGlyphs" >22</text>
<rect x="3272" y="908.8" width="7" height="2" fill="#8fa1a9"/>
<text x="3284.5" y="905.5" font-size="23" fill="#000" text-anchor="start" textLength="46" lengthAdjust="spacingAndGlyphs" >21,5</text>
<rect x="3272" y="497" width="8" height="2" fill="#000"/>
<rect x="3280" y="482" width="76" height="32" fill="url(#gGold)" stroke="#8c9ba3" stroke-width="2"/>
<text x="3318.3" y="506.8" font-size="23.5" font-weight="bold" fill="#000" text-anchor="middle" textLength="67" lengthAdjust="spacingAndGlyphs" >24,70</text>
<rect x="3272" y="603.6" width="7" height="1.6" fill="#fa0505"/><rect x="3272" y="605.2" width="7" height="1.8" fill="#0000fb"/>
<rect x="3280" y="574" width="82" height="30" fill="url(#gLbl)" stroke="#8c9ba3" stroke-width="2"/>
<text x="3321.0" y="597.1" font-size="23" fill="#fa0505" text-anchor="middle" textLength="73" lengthAdjust="spacingAndGlyphs" >23,873</text>
<rect x="3280" y="604" width="82" height="30" fill="url(#gLbl)" stroke="#8c9ba3" stroke-width="2"/>
<text x="3321.0" y="627.1" font-size="23" fill="#0000fb" text-anchor="middle" textLength="73" lengthAdjust="spacingAndGlyphs" >23,860</text>
<rect x="0" y="998.9" width="3270.5" height="2" fill="#1c1cd0"/>
<rect x="0" y="1082.8" width="3270.5" height="2" fill="#1c1cd0"/>
<polyline points="0.0,1065.3 33.0,1072.3 93.0,1068.0 151.0,1074.4 211.0,1068.3 271.0,1056.2 329.0,1060.2 389.0,1074.0 449.0,1082.5 507.0,1080.1 567.0,1092.2 627.0,1092.2 685.0,1056.2 745.0,1060.2 805.0,1058.2 865.0,1058.2 923.0,1062.7 983.0,1052.4 1043.0,1052.4 1101.0,1062.7 1161.0,1068.5 1221.0,1068.5 1279.0,1074.8 1339.0,1082.0 1399.0,1090.5 1457.0,1084.7 1517.0,1080.2 1577.0,1068.5 1637.0,1070.8 1695.0,1058.7 1755.0,1054.6 1815.0,1062.7 1873.0,1058.7 1933.0,1072.5 1993.0,1052.4 2051.0,1060.0 2111.0,1074.3 2171.0,1054.1 2229.0,1050.6 2289.0,1048.2 2349.0,1041.7 2407.0,1041.7 2467.0,1041.7 2527.0,1032.2 2587.0,1039.9 2645.0,1039.9 2705.0,1041.7 2765.0,1048.2 2823.0,1050.6 2883.0,1048.2 2943.0,1046.4 3001.0,1042.3 3061.0,1046.4 3121.0,1024.5" fill="none" stroke="#000" stroke-width="2" stroke-linejoin="round" />
<rect x="3272" y="1144.5" width="7" height="2" fill="#8fa1a9"/>
<rect x="3272" y="1124.8" width="3.5" height="2" fill="#8fa1a9"/>
<rect x="3272" y="1103.8" width="7" height="2" fill="#8fa1a9"/>
<rect x="3272" y="1082.8" width="3.5" height="2" fill="#8fa1a9"/>
<rect x="3272" y="1061.8" width="7" height="2" fill="#8fa1a9"/>
<rect x="3272" y="1040.8" width="3.5" height="2" fill="#8fa1a9"/>
<rect x="3272" y="1019.9" width="7" height="2" fill="#8fa1a9"/>
<rect x="3272" y="998.9" width="3.5" height="2" fill="#8fa1a9"/>
<rect x="3272" y="977.9" width="7" height="2" fill="#8fa1a9"/>
<rect x="3272" y="956.9" width="3.5" height="2" fill="#8fa1a9"/>
<rect x="3272" y="936.0" width="7" height="2" fill="#8fa1a9"/>
<text x="3284.5" y="943.3" font-size="23" font-weight="bold" fill="#000" text-anchor="start" textLength="46" lengthAdjust="spacingAndGlyphs" >100</text>
<text x="3284.5" y="985.8" font-size="23" fill="#000" text-anchor="start" textLength="27" lengthAdjust="spacingAndGlyphs" >80</text>
<text x="3284.5" y="1069.8" font-size="23" fill="#000" text-anchor="start" textLength="27" lengthAdjust="spacingAndGlyphs" >40</text>
<text x="3284.5" y="1111.9" font-size="23" fill="#000" text-anchor="start" textLength="27" lengthAdjust="spacingAndGlyphs" >20</text>
<text x="3284.5" y="1149" font-size="23" font-weight="bold" fill="#000" text-anchor="start" textLength="15" lengthAdjust="spacingAndGlyphs" >0</text>
<rect x="3272" y="1020.6" width="8" height="2" fill="#000"/>
<rect x="3280" y="1006" width="82" height="30" fill="url(#gLbl)" stroke="#8c9ba3" stroke-width="2"/>
<text x="3321.0" y="1029.1" font-size="23" fill="#000" text-anchor="middle" textLength="73" lengthAdjust="spacingAndGlyphs" >58,723</text>
<rect x="0" y="1253" width="3121" height="2" fill="#000"/>
<polyline points="0.3,1211.9 33.0,1211.9 93.0,1236.1 627.0,1236.1 685.0,1185.9 1815.0,1185.9 1873.0,1242.4 1933.0,1242.4 1993.0,1234.3 2111.0,1234.3 2171.0,1188.3 3121.0,1188.6" fill="none" stroke="#008000" stroke-width="5" stroke-dasharray="5 11" stroke-dashoffset="-3"/>
<polyline points="0.3,1284.1 507.0,1284.1 567.0,1332.1 1695.0,1332.1 1755.0,1278.7 1873.0,1278.7 1933.0,1435.7 3061.0,1435.7 3121.0,1324.0" fill="none" stroke="#fb0000" stroke-width="5" stroke-dasharray="5 11" stroke-dashoffset="-3"/>
<polyline points="0.0,1265.7 33.0,1278.7 93.0,1250.0 151.0,1260.3 211.0,1246.4 271.0,1242.4 329.0,1256.3 389.0,1276.5 449.0,1264.3 507.0,1252.7 567.0,1331.6 627.0,1260.0 685.0,1188.1 745.0,1262.1 805.0,1247.8 865.0,1254.0 923.0,1256.3 983.0,1244.2 1043.0,1254.0 1101.0,1262.1 1161.0,1262.1 1221.0,1254.5 1279.0,1264.3 1339.0,1266.1 1399.0,1278.3 1457.0,1244.2 1517.0,1250.0 1577.0,1242.4 1637.0,1256.3 1695.0,1242.4 1755.0,1247.8 1815.0,1264.3 1873.0,1250.4 1933.0,1434.8 1993.0,1235.2 2051.0,1270.2 2111.0,1323.5 2171.0,1189.5 2229.0,1247.8 2289.0,1247.8 2349.0,1247.8 2407.0,1254.0 2467.0,1254.5 2527.0,1232.5 2587.0,1267.9 2645.0,1254.5 2705.0,1256.3 2765.0,1259.9 2823.0,1254.5 2883.0,1252.7 2943.0,1252.7 3001.0,1250.4 3061.0,1258.1 3121.0,1207.0" fill="none" stroke="#000" stroke-width="3.5" stroke-linejoin="round" stroke-linejoin="miter"/>
<text x="3363" y="1193" font-size="23" fill="#000" text-anchor="start" textLength="10.5" lengthAdjust="spacingAndGlyphs" >0</text>
<rect x="3272" y="1184" width="8" height="2" fill="#008000"/>
<rect x="3272" y="1202.8" width="8" height="2" fill="#000"/>
<rect x="3272" y="1250" width="8" height="2" fill="#000"/>
<rect x="3272" y="1320.4" width="8" height="2" fill="#fa0505"/>
<rect x="3280" y="1164" width="82" height="30" fill="url(#gLbl)" stroke="#8c9ba3" stroke-width="2"/>
<text x="3321.0" y="1187.1" font-size="23" fill="#008000" text-anchor="middle" textLength="73" lengthAdjust="spacingAndGlyphs" >98.894</text>
<rect x="3280" y="1194" width="82" height="30" fill="url(#gLbl)" stroke="#8c9ba3" stroke-width="2"/>
<text x="3321.0" y="1217.1" font-size="23" fill="#000" text-anchor="middle" textLength="73" lengthAdjust="spacingAndGlyphs" >72.603</text>
<rect x="3280" y="1236" width="20" height="30" fill="url(#gLbl)" stroke="#8c9ba3" stroke-width="2"/>
<text x="3290.0" y="1259.1" font-size="23" fill="#000" text-anchor="middle" textLength="12" lengthAdjust="spacingAndGlyphs" >0</text>
<rect x="3280" y="1306" width="108" height="30" fill="url(#gLbl)" stroke="#8c9ba3" stroke-width="2"/>
<text x="3334.0" y="1329.1" font-size="23" fill="#fa0505" text-anchor="middle" textLength="99" lengthAdjust="spacingAndGlyphs" >−105.963</text>
<rect x="3272" y="1384.0" width="7" height="2" fill="#8fa1a9"/>
<text x="3284.5" y="1392.8" font-size="23" fill="#000" text-anchor="start" textLength="100" lengthAdjust="spacingAndGlyphs" >−200.000</text>
<path d="M0,1449 L0.0,1506.4 L33.0,1522.1 L93.0,1496.5 L151.0,1514.4 L211.0,1510.4 L271.0,1483.0 L329.0,1471.4 L389.0,1506.4 L449.0,1534.2 L507.0,1532.4 L567.0,1602.3 L627.0,1598.3 L685.0,1534.2 L745.0,1554.3 L805.0,1542.2 L865.0,1530.6 L923.0,1550.3 L983.0,1518.5 L1043.0,1500.1 L1101.0,1518.5 L1161.0,1518.5 L1221.0,1524.3 L1279.0,1545.4 L1339.0,1569.1 L1399.0,1618.5 L1457.0,1590.2 L1517.0,1580.4 L1577.0,1566.5 L1637.0,1584.4 L1695.0,1576.3 L1755.0,1570.5 L1815.0,1590.2 L1873.0,1566.5 L1933.0,1618.5 L1993.0,1568.7 L2051.0,1590.2 L2111.0,1675.9 L2171.0,1622.5 L2229.0,1614.6 L2289.0,1588.1 L2349.0,1576.2 L2407.0,1578.6 L2467.0,1556.4 L2527.0,1515.7 L2587.0,1544.1 L2645.0,1548.3 L2705.0,1546.0 L2765.0,1568.2 L2823.0,1584.3 L2883.0,1578.1 L2943.0,1580.0 L3001.0,1566.3 L3061.0,1578.1 L3121.0,1528.0 L3121.0,1449 Z" fill="url(#gM)" clip-path="url(#cpM)"/>
<g clip-path="url(#cpM)">
<polyline points="0.0,1506.4 33.0,1522.1 93.0,1496.5 151.0,1514.4 211.0,1510.4 271.0,1483.0 329.0,1471.4 389.0,1506.4 449.0,1534.2 507.0,1532.4 567.0,1602.3 627.0,1598.3 685.0,1534.2 745.0,1554.3 805.0,1542.2 865.0,1530.6 923.0,1550.3 983.0,1518.5 1043.0,1500.1 1101.0,1518.5 1161.0,1518.5 1221.0,1524.3 1279.0,1545.4 1339.0,1569.1 1399.0,1618.5 1457.0,1590.2 1517.0,1580.4 1577.0,1566.5 1637.0,1584.4 1695.0,1576.3 1755.0,1570.5 1815.0,1590.2 1873.0,1566.5 1933.0,1618.5 1993.0,1568.7 2051.0,1590.2 2111.0,1675.9 2171.0,1622.5 2229.0,1614.6 2289.0,1588.1 2349.0,1576.2 2407.0,1578.6 2467.0,1556.4 2527.0,1515.7 2587.0,1544.1 2645.0,1548.3 2705.0,1546.0 2765.0,1568.2 2823.0,1584.3 2883.0,1578.1 2943.0,1580.0 3001.0,1566.3 3061.0,1578.1 3121.0,1528.0" fill="none" stroke="#000" stroke-width="2" stroke-linejoin="round" />
</g>
<rect x="3272" y="1518.0" width="7" height="2" fill="#8fa1a9"/>
<rect x="3272" y="1595.0" width="7" height="2" fill="#8fa1a9"/>
<rect x="3272" y="1671.0" width="7" height="2" fill="#8fa1a9"/>
<rect x="3272" y="1524" width="8" height="2" fill="#000"/>
<rect x="3280" y="1510" width="94" height="30" fill="url(#gLbl)" stroke="#8c9ba3" stroke-width="2"/>
<text x="3327.0" y="1533.1" font-size="23" fill="#000" text-anchor="middle" textLength="86" lengthAdjust="spacingAndGlyphs" >−1,0488</text>
<text x="3284.5" y="1604" font-size="23" fill="#000" text-anchor="start" textLength="46" lengthAdjust="spacingAndGlyphs" >−1,5</text>
<text x="3284.5" y="1679" font-size="23" fill="#000" text-anchor="start" textLength="27" lengthAdjust="spacingAndGlyphs" >−2</text>
<rect x="14.0" y="1824" width="36" height="114" fill="url(#gBR)" stroke="#c00000" stroke-width="2"/>
<rect x="74.0" y="1824" width="36" height="114" fill="url(#gBR)" stroke="#c00000" stroke-width="2"/>
<rect x="132.0" y="1824" width="36" height="114" fill="url(#gBR)" stroke="#c00000" stroke-width="2"/>
<rect x="192.0" y="1824" width="36" height="114" fill="url(#gBR)" stroke="#c00000" stroke-width="2"/>
<rect x="252.0" y="1710" width="36" height="114" fill="url(#gBG)" stroke="#003f00" stroke-width="2"/>
<rect x="310.0" y="1710" width="36" height="114" fill="url(#gBG)" stroke="#003f00" stroke-width="2"/>
<rect x="370.0" y="1824" width="36" height="114" fill="url(#gBR)" stroke="#c00000" stroke-width="2"/>
<rect x="430.0" y="1824" width="36" height="114" fill="url(#gBR)" stroke="#c00000" stroke-width="2"/>
<rect x="488.0" y="1824" width="36" height="114" fill="url(#gBR)" stroke="#c00000" stroke-width="2"/>
<rect x="548.0" y="1824" width="36" height="114" fill="url(#gBR)" stroke="#c00000" stroke-width="2"/>
<rect x="608.0" y="1824" width="36" height="114" fill="url(#gBR)" stroke="#c00000" stroke-width="2"/>
<rect x="666.0" y="1710" width="36" height="114" fill="url(#gBG)" stroke="#003f00" stroke-width="2"/>
<rect x="726.0" y="1710" width="36" height="114" fill="url(#gBG)" stroke="#003f00" stroke-width="2"/>
<rect x="786.0" y="1710" width="36" height="114" fill="url(#gBG)" stroke="#003f00" stroke-width="2"/>
<rect x="846.0" y="1710" width="36" height="114" fill="url(#gBG)" stroke="#003f00" stroke-width="2"/>
<rect x="904.0" y="1710" width="36" height="114" fill="url(#gBG)" stroke="#003f00" stroke-width="2"/>
<rect x="964.0" y="1710" width="36" height="114" fill="url(#gBG)" stroke="#003f00" stroke-width="2"/>
<rect x="1024.0" y="1710" width="36" height="114" fill="url(#gBG)" stroke="#003f00" stroke-width="2"/>
<rect x="1082.0" y="1710" width="36" height="114" fill="url(#gBG)" stroke="#003f00" stroke-width="2"/>
<rect x="1142.0" y="1824" width="36" height="114" fill="url(#gBR)" stroke="#c00000" stroke-width="2"/>
<rect x="1202.0" y="1824" width="36" height="114" fill="url(#gBR)" stroke="#c00000" stroke-width="2"/>
<rect x="1260.0" y="1824" width="36" height="114" fill="url(#gBR)" stroke="#c00000" stroke-width="2"/>
<rect x="1320.0" y="1824" width="36" height="114" fill="url(#gBR)" stroke="#c00000" stroke-width="2"/>
<rect x="1380.0" y="1824" width="36" height="114" fill="url(#gBR)" stroke="#c00000" stroke-width="2"/>
<rect x="1438.0" y="1824" width="36" height="114" fill="url(#gBR)" stroke="#c00000" stroke-width="2"/>
<rect x="1498.0" y="1824" width="36" height="114" fill="url(#gBR)" stroke="#c00000" stroke-width="2"/>
<rect x="1558.0" y="1710" width="36" height="114" fill="url(#gBG)" stroke="#003f00" stroke-width="2"/>
<rect x="1618.0" y="1710" width="36" height="114" fill="url(#gBG)" stroke="#003f00" stroke-width="2"/>
<rect x="1676.0" y="1710" width="36" height="114" fill="url(#gBG)" stroke="#003f00" stroke-width="2"/>
<rect x="1736.0" y="1710" width="36" height="114" fill="url(#gBG)" stroke="#003f00" stroke-width="2"/>
<rect x="1796.0" y="1824" width="36" height="114" fill="url(#gBR)" stroke="#c00000" stroke-width="2"/>
<rect x="1854.0" y="1824" width="36" height="114" fill="url(#gBR)" stroke="#c00000" stroke-width="2"/>
<rect x="1914.0" y="1824" width="36" height="114" fill="url(#gBR)" stroke="#c00000" stroke-width="2"/>
<rect x="1974.0" y="1710" width="36" height="114" fill="url(#gBG)" stroke="#003f00" stroke-width="2"/>
<rect x="2032.0" y="1710" width="36" height="114" fill="url(#gBG)" stroke="#003f00" stroke-width="2"/>
<rect x="2092.0" y="1824" width="36" height="114" fill="url(#gBR)" stroke="#c00000" stroke-width="2"/>
<rect x="2152.0" y="1710" width="36" height="114" fill="url(#gBG)" stroke="#003f00" stroke-width="2"/>
<rect x="2210.0" y="1710" width="36" height="114" fill="url(#gBG)" stroke="#003f00" stroke-width="2"/>
<rect x="2270.0" y="1710" width="36" height="114" fill="url(#gBG)" stroke="#003f00" stroke-width="2"/>
<rect x="2330.0" y="1710" width="36" height="114" fill="url(#gBG)" stroke="#003f00" stroke-width="2"/>
<rect x="2388.0" y="1710" width="36" height="114" fill="url(#gBG)" stroke="#003f00" stroke-width="2"/>
<rect x="2448.0" y="1710" width="36" height="114" fill="url(#gBG)" stroke="#003f00" stroke-width="2"/>
<rect x="2508.0" y="1710" width="36" height="114" fill="url(#gBG)" stroke="#003f00" stroke-width="2"/>
<rect x="2568.0" y="1710" width="36" height="114" fill="url(#gBG)" stroke="#003f00" stroke-width="2"/>
<rect x="2626.0" y="1710" width="36" height="114" fill="url(#gBG)" stroke="#003f00" stroke-width="2"/>
<rect x="2686.0" y="1710" width="36" height="114" fill="url(#gBG)" stroke="#003f00" stroke-width="2"/>
<rect x="2746.0" y="1824" width="36" height="114" fill="url(#gBR)" stroke="#c00000" stroke-width="2"/>
<rect x="2804.0" y="1824" width="36" height="114" fill="url(#gBR)" stroke="#c00000" stroke-width="2"/>
<rect x="2864.0" y="1824" width="36" height="114" fill="url(#gBR)" stroke="#c00000" stroke-width="2"/>
<rect x="2924.0" y="1824" width="36" height="114" fill="url(#gBR)" stroke="#c00000" stroke-width="2"/>
<rect x="2982.0" y="1824" width="36" height="114" fill="url(#gBR)" stroke="#c00000" stroke-width="2"/>
<rect x="3042.0" y="1824" width="36" height="114" fill="url(#gBR)" stroke="#c00000" stroke-width="2"/>
<rect x="3102.0" y="1710" width="36" height="114" fill="url(#gBG)" stroke="#003f00" stroke-width="2"/>
<rect x="0" y="1935.6" width="3061" height="5.8" fill="#fb0000"/>
<line x1="3060.6" y1="1938.5" x2="3120.2" y2="1710.4" stroke="#008000" stroke-width="5.2"/>
<rect x="3272" y="1765.0" width="7" height="2" fill="#8fa1a9"/>
<rect x="3272" y="1821.0" width="7" height="2" fill="#8fa1a9"/>
<rect x="3272" y="1879.0" width="7" height="2" fill="#8fa1a9"/>
<rect x="3272" y="1935.0" width="7" height="2" fill="#8fa1a9"/>
<text x="3284.5" y="1775" font-size="23" fill="#000" text-anchor="start" textLength="31" lengthAdjust="spacingAndGlyphs" >0,5</text>
<text x="3284.5" y="1830" font-size="23" font-weight="bold" fill="#000" text-anchor="start" textLength="15" lengthAdjust="spacingAndGlyphs" >0</text>
<text x="3284.5" y="1888.5" font-size="23" fill="#000" text-anchor="start" textLength="46" lengthAdjust="spacingAndGlyphs" >−0,5</text>
<text x="3284.5" y="1942" font-size="23" fill="#000" text-anchor="start" textLength="25" lengthAdjust="spacingAndGlyphs" >−1</text>
<rect x="3272" y="1707" width="7" height="2" fill="#008000"/>
<rect x="3280" y="1689" width="20" height="17" fill="url(#gLbl)" stroke="#8c9ba3" stroke-width="2"/>
<text x="3290.0" y="1705.6" font-size="23" fill="#008000" text-anchor="middle" ></text>
<text x="3290.8" y="1711.8" font-size="23" fill="#008000" text-anchor="middle" >1</text>
<rect x="3280" y="1706" width="20" height="30" fill="url(#gLbl)" stroke="#8c9ba3" stroke-width="2"/>
<text x="3290.0" y="1729.1" font-size="23" fill="#008000" text-anchor="middle" textLength="10" lengthAdjust="spacingAndGlyphs" >1</text>
<rect x="31.0" y="1952" width="2" height="5" fill="#8fa1a9"/>
<text x="32.0" y="1980" font-size="23" fill="#000" text-anchor="middle" textLength="27" lengthAdjust="spacingAndGlyphs" >25</text>
<rect x="91.0" y="1952" width="2" height="5" fill="#8fa1a9"/>
<text x="92.0" y="1980" font-size="23" fill="#000" text-anchor="middle" textLength="27" lengthAdjust="spacingAndGlyphs" >26</text>
<rect x="149.0" y="1952" width="2" height="5" fill="#8fa1a9"/>
<text x="150.0" y="1980" font-size="23" fill="#000" text-anchor="middle" textLength="27" lengthAdjust="spacingAndGlyphs" >27</text>
<rect x="209.0" y="1952" width="2" height="5" fill="#8fa1a9"/>
<text x="210.0" y="1980" font-size="23" fill="#000" text-anchor="middle" textLength="27" lengthAdjust="spacingAndGlyphs" >28</text>
<rect x="269.0" y="1952" width="2" height="5" fill="#8fa1a9"/>
<text x="270.0" y="1980" font-size="23" fill="#000" text-anchor="middle" textLength="27" lengthAdjust="spacingAndGlyphs" >29</text>
<rect x="327.0" y="1952" width="2" height="5" fill="#8fa1a9"/>
<text x="329.0" y="1980" font-size="25" font-weight="bold" fill="#000" text-anchor="middle" textLength="36.5" lengthAdjust="spacingAndGlyphs" >ott</text>
<rect x="387.0" y="1952" width="2" height="5" fill="#8fa1a9"/>
<text x="388.0" y="1980" font-size="23" fill="#000" text-anchor="middle" textLength="27" lengthAdjust="spacingAndGlyphs" >03</text>
<rect x="447.0" y="1952" width="2" height="5" fill="#8fa1a9"/>
<text x="448.0" y="1980" font-size="23" fill="#000" text-anchor="middle" textLength="27" lengthAdjust="spacingAndGlyphs" >04</text>
<rect x="505.0" y="1952" width="2" height="5" fill="#8fa1a9"/>
<text x="506.0" y="1980" font-size="23" fill="#000" text-anchor="middle" textLength="27" lengthAdjust="spacingAndGlyphs" >05</text>
<rect x="565.0" y="1952" width="2" height="5" fill="#8fa1a9"/>
<text x="566.0" y="1980" font-size="23" fill="#000" text-anchor="middle" textLength="27" lengthAdjust="spacingAndGlyphs" >06</text>
<rect x="625.0" y="1952" width="2" height="5" fill="#8fa1a9"/>
<text x="626.0" y="1980" font-size="23" fill="#000" text-anchor="middle" textLength="27" lengthAdjust="spacingAndGlyphs" >09</text>
<rect x="683.0" y="1952" width="2" height="5" fill="#8fa1a9"/>
<text x="684.0" y="1980" font-size="23" fill="#000" text-anchor="middle" textLength="27" lengthAdjust="spacingAndGlyphs" >10</text>
<rect x="743.0" y="1952" width="2" height="5" fill="#8fa1a9"/>
<text x="744.0" y="1980" font-size="23" fill="#000" text-anchor="middle" textLength="27" lengthAdjust="spacingAndGlyphs" >11</text>
<rect x="803.0" y="1952" width="2" height="5" fill="#8fa1a9"/>
<text x="804.0" y="1980" font-size="23" fill="#000" text-anchor="middle" textLength="27" lengthAdjust="spacingAndGlyphs" >12</text>
<rect x="863.0" y="1952" width="2" height="5" fill="#8fa1a9"/>
<text x="864.0" y="1980" font-size="23" fill="#000" text-anchor="middle" textLength="27" lengthAdjust="spacingAndGlyphs" >13</text>
<rect x="921.0" y="1952" width="2" height="5" fill="#8fa1a9"/>
<text x="922.0" y="1980" font-size="23" fill="#000" text-anchor="middle" textLength="27" lengthAdjust="spacingAndGlyphs" >16</text>
<rect x="981.0" y="1952" width="2" height="5" fill="#8fa1a9"/>
<text x="982.0" y="1980" font-size="23" fill="#000" text-anchor="middle" textLength="27" lengthAdjust="spacingAndGlyphs" >17</text>
<rect x="1041.0" y="1952" width="2" height="5" fill="#8fa1a9"/>
<text x="1042.0" y="1980" font-size="23" fill="#000" text-anchor="middle" textLength="27" lengthAdjust="spacingAndGlyphs" >18</text>
<rect x="1099.0" y="1952" width="2" height="5" fill="#8fa1a9"/>
<text x="1100.0" y="1980" font-size="23" fill="#000" text-anchor="middle" textLength="27" lengthAdjust="spacingAndGlyphs" >19</text>
<rect x="1159.0" y="1952" width="2" height="5" fill="#8fa1a9"/>
<text x="1160.0" y="1980" font-size="23" fill="#000" text-anchor="middle" textLength="27" lengthAdjust="spacingAndGlyphs" >20</text>
<rect x="1219.0" y="1952" width="2" height="5" fill="#8fa1a9"/>
<text x="1220.0" y="1980" font-size="23" fill="#000" text-anchor="middle" textLength="27" lengthAdjust="spacingAndGlyphs" >23</text>
<rect x="1277.0" y="1952" width="2" height="5" fill="#8fa1a9"/>
<text x="1278.0" y="1980" font-size="23" fill="#000" text-anchor="middle" textLength="27" lengthAdjust="spacingAndGlyphs" >24</text>
<rect x="1337.0" y="1952" width="2" height="5" fill="#8fa1a9"/>
<text x="1338.0" y="1980" font-size="23" fill="#000" text-anchor="middle" textLength="27" lengthAdjust="spacingAndGlyphs" >25</text>
<rect x="1397.0" y="1952" width="2" height="5" fill="#8fa1a9"/>
<text x="1398.0" y="1980" font-size="23" fill="#000" text-anchor="middle" textLength="27" lengthAdjust="spacingAndGlyphs" >26</text>
<rect x="1455.0" y="1952" width="2" height="5" fill="#8fa1a9"/>
<text x="1456.0" y="1980" font-size="23" fill="#000" text-anchor="middle" textLength="27" lengthAdjust="spacingAndGlyphs" >27</text>
<rect x="1515.0" y="1952" width="2" height="5" fill="#8fa1a9"/>
<text x="1516.0" y="1980" font-size="23" fill="#000" text-anchor="middle" textLength="27" lengthAdjust="spacingAndGlyphs" >30</text>
<rect x="1575.0" y="1952" width="2" height="5" fill="#8fa1a9"/>
<text x="1576.0" y="1980" font-size="23" fill="#000" text-anchor="middle" textLength="27" lengthAdjust="spacingAndGlyphs" >31</text>
<rect x="1635.0" y="1952" width="2" height="5" fill="#8fa1a9"/>
<text x="1637.0" y="1980" font-size="25" font-weight="bold" fill="#000" text-anchor="middle" textLength="46" lengthAdjust="spacingAndGlyphs" >nov</text>
<rect x="1693.0" y="1952" width="2" height="5" fill="#8fa1a9"/>
<text x="1694.0" y="1980" font-size="23" fill="#000" text-anchor="middle" textLength="27" lengthAdjust="spacingAndGlyphs" >02</text>
<rect x="1753.0" y="1952" width="2" height="5" fill="#8fa1a9"/>
<text x="1754.0" y="1980" font-size="23" fill="#000" text-anchor="middle" textLength="27" lengthAdjust="spacingAndGlyphs" >03</text>
<rect x="1813.0" y="1952" width="2" height="5" fill="#8fa1a9"/>
<text x="1814.0" y="1980" font-size="23" fill="#000" text-anchor="middle" textLength="27" lengthAdjust="spacingAndGlyphs" >06</text>
<rect x="1871.0" y="1952" width="2" height="5" fill="#8fa1a9"/>
<text x="1872.0" y="1980" font-size="23" fill="#000" text-anchor="middle" textLength="27" lengthAdjust="spacingAndGlyphs" >07</text>
<rect x="1931.0" y="1952" width="2" height="5" fill="#8fa1a9"/>
<text x="1932.0" y="1980" font-size="23" fill="#000" text-anchor="middle" textLength="27" lengthAdjust="spacingAndGlyphs" >08</text>
<rect x="1991.0" y="1952" width="2" height="5" fill="#8fa1a9"/>
<text x="1992.0" y="1980" font-size="23" fill="#000" text-anchor="middle" textLength="27" lengthAdjust="spacingAndGlyphs" >09</text>
<rect x="2049.0" y="1952" width="2" height="5" fill="#8fa1a9"/>
<text x="2050.0" y="1980" font-size="23" fill="#000" text-anchor="middle" textLength="27" lengthAdjust="spacingAndGlyphs" >10</text>
<rect x="2109.0" y="1952" width="2" height="5" fill="#8fa1a9"/>
<text x="2110.0" y="1980" font-size="23" fill="#000" text-anchor="middle" textLength="27" lengthAdjust="spacingAndGlyphs" >13</text>
<rect x="2169.0" y="1952" width="2" height="5" fill="#8fa1a9"/>
<text x="2170.0" y="1980" font-size="23" fill="#000" text-anchor="middle" textLength="27" lengthAdjust="spacingAndGlyphs" >14</text>
<rect x="2227.0" y="1952" width="2" height="5" fill="#8fa1a9"/>
<text x="2228.0" y="1980" font-size="23" fill="#000" text-anchor="middle" textLength="27" lengthAdjust="spacingAndGlyphs" >15</text>
<rect x="2287.0" y="1952" width="2" height="5" fill="#8fa1a9"/>
<text x="2288.0" y="1980" font-size="23" fill="#000" text-anchor="middle" textLength="27" lengthAdjust="spacingAndGlyphs" >16</text>
<rect x="2347.0" y="1952" width="2" height="5" fill="#8fa1a9"/>
<text x="2348.0" y="1980" font-size="23" fill="#000" text-anchor="middle" textLength="27" lengthAdjust="spacingAndGlyphs" >17</text>
<rect x="2405.0" y="1952" width="2" height="5" fill="#8fa1a9"/>
<text x="2406.0" y="1980" font-size="23" fill="#000" text-anchor="middle" textLength="27" lengthAdjust="spacingAndGlyphs" >20</text>
<rect x="2465.0" y="1952" width="2" height="5" fill="#8fa1a9"/>
<text x="2466.0" y="1980" font-size="23" fill="#000" text-anchor="middle" textLength="27" lengthAdjust="spacingAndGlyphs" >21</text>
<rect x="2525.0" y="1952" width="2" height="5" fill="#8fa1a9"/>
<text x="2526.0" y="1980" font-size="23" fill="#000" text-anchor="middle" textLength="27" lengthAdjust="spacingAndGlyphs" >22</text>
<rect x="2585.0" y="1952" width="2" height="5" fill="#8fa1a9"/>
<text x="2586.0" y="1980" font-size="23" fill="#000" text-anchor="middle" textLength="27" lengthAdjust="spacingAndGlyphs" >23</text>
<rect x="2643.0" y="1952" width="2" height="5" fill="#8fa1a9"/>
<text x="2644.0" y="1980" font-size="23" fill="#000" text-anchor="middle" textLength="27" lengthAdjust="spacingAndGlyphs" >24</text>
<rect x="2703.0" y="1952" width="2" height="5" fill="#8fa1a9"/>
<text x="2704.0" y="1980" font-size="23" fill="#000" text-anchor="middle" textLength="27" lengthAdjust="spacingAndGlyphs" >27</text>
<rect x="2763.0" y="1952" width="2" height="5" fill="#8fa1a9"/>
<text x="2764.0" y="1980" font-size="23" fill="#000" text-anchor="middle" textLength="27" lengthAdjust="spacingAndGlyphs" >28</text>
<rect x="2821.0" y="1952" width="2" height="5" fill="#8fa1a9"/>
<text x="2822.0" y="1980" font-size="23" fill="#000" text-anchor="middle" textLength="27" lengthAdjust="spacingAndGlyphs" >29</text>
<rect x="2881.0" y="1952" width="2" height="5" fill="#8fa1a9"/>
<text x="2882.0" y="1980" font-size="23" fill="#000" text-anchor="middle" textLength="27" lengthAdjust="spacingAndGlyphs" >30</text>
<rect x="2941.0" y="1952" width="2" height="5" fill="#8fa1a9"/>
<text x="2943.0" y="1980" font-size="25" font-weight="bold" fill="#000" text-anchor="middle" textLength="36.5" lengthAdjust="spacingAndGlyphs" >dic</text>
<rect x="2999.0" y="1952" width="2" height="5" fill="#8fa1a9"/>
<text x="3000.0" y="1980" font-size="23" fill="#000" text-anchor="middle" textLength="27" lengthAdjust="spacingAndGlyphs" >04</text>
<rect x="3059.0" y="1952" width="2" height="5" fill="#8fa1a9"/>
<text x="3060.0" y="1980" font-size="23" fill="#000" text-anchor="middle" textLength="27" lengthAdjust="spacingAndGlyphs" >05</text>
<rect x="3119.0" y="1952" width="2" height="5" fill="#8fa1a9"/>
<text x="3120.0" y="1980" font-size="23" fill="#000" text-anchor="middle" textLength="27" lengthAdjust="spacingAndGlyphs" >06</text>
<rect x="3177.0" y="1952" width="2" height="5" fill="#8fa1a9"/>
<text x="3178.0" y="1980" font-size="23" fill="#000" text-anchor="middle" textLength="27" lengthAdjust="spacingAndGlyphs" >07</text>
<rect x="3237.0" y="1952" width="2" height="5" fill="#8fa1a9"/>
<text x="3238.0" y="1980" font-size="23" fill="#000" text-anchor="middle" textLength="27" lengthAdjust="spacingAndGlyphs" >08</text>
<rect x="0" y="150" width="536" height="32" fill="#e3eaf1"/>
<rect x="0" y="182" width="538" height="2" fill="#8d9ea6"/>
<rect x="96" y="150" width="2" height="34" fill="#8d9ea6"/>
<rect x="240" y="150" width="2" height="34" fill="#8d9ea6"/>
<rect x="278" y="150" width="2" height="34" fill="#8d9ea6"/>
<rect x="414" y="150" width="2" height="34" fill="#8d9ea6"/>
<rect x="536" y="150" width="2" height="34" fill="#8d9ea6"/>
<path d="M5.2 155.4 H21.7 L28.8 162.4 V177.0 H5.2 Z" fill="#fff" stroke="#88a3bd" stroke-width="1.8" stroke-linejoin="round"/>
<path d="M21.7 155.4 V162.4 H28.8 Z" fill="#d5e0ea" stroke="#88a3bd" stroke-width="1.2"/>
<path d="M14.0 159.8 H18.0 V166.0 H23.8 L16.0 173.8 L8.2 166.0 H14.0 Z" fill="#e53a3a"/>
<path d="M37.2 155.4 H53.7 L60.800000000000004 162.4 V177.0 H37.2 Z" fill="#fff" stroke="#88a3bd" stroke-width="1.8" stroke-linejoin="round"/>
<path d="M53.7 155.4 V162.4 H60.800000000000004 Z" fill="#d5e0ea" stroke="#88a3bd" stroke-width="1.2"/>
<path d="M48.0 159.8 L55.800000000000004 167.4 H50.0 V173.4 H46.0 V167.4 H40.2 Z" fill="#1cb81c"/>
<circle cx="80" cy="166" r="12" fill="#557b98"/>
<path d="M75.9 161.9 L84.1 170.1 M84.1 161.9 L75.9 170.1" stroke="#e1e8ee" stroke-width="4.8" stroke-linecap="round"/>
<rect x="104" y="156" width="10" height="20" fill="#009a32"/><rect x="114" y="156" width="10" height="20" fill="#fb0000"/>
<text x="133.3" y="173.8" font-size="23.5" fill="#000" text-anchor="start" textLength="69.5" lengthAdjust="spacingAndGlyphs" >Prezzo</text>
<g transform="translate(222 166) scale(1) translate(-12 -12)"><path d="M0.8 19.8 L8.7 11.5 L9.1 3.4 L10.9 0.9 L17.5 0.6 L14.8 2.4 L14.8 8.7 L19.8 8.7 L23 6.3 L23.3 12.3 L21 15 L14.7 15.4 L6.3 23 Q3.6 25 1.3 23 Q-0.8 21.4 0.8 19.8 Z" fill="none" stroke="#4f7896" stroke-width="2" stroke-linejoin="round"/></g>
<rect x="249.6" y="158.39999999999998" width="4" height="3.6" rx="0.8" fill="#000"/><rect x="256.6" y="159.1" width="13.4" height="2.3" fill="#000"/>
<rect x="249.6" y="164.39999999999998" width="4" height="3.6" rx="0.8" fill="#000"/><rect x="256.6" y="165.1" width="13.4" height="2.3" fill="#000"/>
<rect x="249.6" y="170.39999999999998" width="4" height="3.6" rx="0.8" fill="#000"/><rect x="256.6" y="171.1" width="13.4" height="2.3" fill="#000"/>
<rect x="286" y="156" width="20" height="20" fill="#fb0000"/>
<text x="315" y="173.8" font-size="23.5" fill="#000" text-anchor="start" textLength="93.5" lengthAdjust="spacingAndGlyphs" >SMA (13)</text>
<rect x="422" y="156" width="20" height="20" fill="#0000fb"/>
<text x="451" y="173.8" font-size="23.5" fill="#000" text-anchor="start" textLength="79" lengthAdjust="spacingAndGlyphs" >SMA (5)</text>
<rect x="0" y="916" width="186" height="32" fill="#e3eaf1"/>
<rect x="0" y="948" width="188" height="2" fill="#8d9ea6"/>
<rect x="32" y="916" width="2" height="34" fill="#8d9ea6"/>
<rect x="186" y="916" width="2" height="34" fill="#8d9ea6"/>
<circle cx="16" cy="932" r="12" fill="#557b98"/>
<path d="M11.9 927.9 L20.1 936.1 M20.1 927.9 L11.9 936.1" stroke="#e1e8ee" stroke-width="4.8" stroke-linecap="round"/>
<rect x="40" y="922" width="20" height="20" fill="#000"/>
<text x="69" y="940" font-size="23.5" fill="#000" text-anchor="start" textLength="80" lengthAdjust="spacingAndGlyphs" >RSI (14)</text>
<g transform="translate(168 932) scale(1) translate(-12 -12)"><path d="M0.8 19.8 L8.7 11.5 L9.1 3.4 L10.9 0.9 L17.5 0.6 L14.8 2.4 L14.8 8.7 L19.8 8.7 L23 6.3 L23.3 12.3 L21 15 L14.7 15.4 L6.3 23 Q3.6 25 1.3 23 Q-0.8 21.4 0.8 19.8 Z" fill="none" stroke="#4f7896" stroke-width="2" stroke-linejoin="round"/></g>
<rect x="0" y="1160" width="342" height="32" fill="#e3eaf1"/>
<rect x="0" y="1192" width="344" height="2" fill="#8d9ea6"/>
<rect x="32" y="1160" width="2" height="34" fill="#8d9ea6"/>
<rect x="342" y="1160" width="2" height="34" fill="#8d9ea6"/>
<circle cx="16" cy="1176" r="12" fill="#557b98"/>
<path d="M11.9 1171.9 L20.1 1180.1 M20.1 1171.9 L11.9 1180.1" stroke="#e1e8ee" stroke-width="4.8" stroke-linecap="round"/>
<rect x="40" y="1166" width="7" height="20" fill="#000"/><rect x="47" y="1166" width="6" height="20" fill="#008000"/><rect x="53" y="1166" width="7" height="20" fill="#fb0000"/>
<text x="69" y="1184" font-size="23.5" fill="#000" text-anchor="start" textLength="237" lengthAdjust="spacingAndGlyphs" >EccessoVolumePrezzo</text>
<g transform="translate(324 1176) scale(1) translate(-12 -12)"><path d="M0.8 19.8 L8.7 11.5 L9.1 3.4 L10.9 0.9 L17.5 0.6 L14.8 2.4 L14.8 8.7 L19.8 8.7 L23 6.3 L23.3 12.3 L21 15 L14.7 15.4 L6.3 23 Q3.6 25 1.3 23 Q-0.8 21.4 0.8 19.8 Z" fill="none" stroke="#4f7896" stroke-width="2" stroke-linejoin="round"/></g>
<rect x="0" y="1450" width="632" height="32" fill="#e3eaf1"/>
<rect x="0" y="1482" width="634" height="2" fill="#8d9ea6"/>
<rect x="32" y="1450" width="2" height="34" fill="#8d9ea6"/>
<rect x="632" y="1450" width="2" height="34" fill="#8d9ea6"/>
<circle cx="16" cy="1466" r="12" fill="#557b98"/>
<path d="M11.9 1461.9 L20.1 1470.1 M20.1 1461.9 L11.9 1470.1" stroke="#e1e8ee" stroke-width="4.8" stroke-linecap="round"/>
<rect x="40" y="1456" width="20" height="20" fill="#000"/>
<text x="69" y="1474" font-size="23.5" fill="#000" text-anchor="start" textLength="526" lengthAdjust="spacingAndGlyphs" >Forza relat Mansfield (FTSE MIB40 Index) (100 10)</text>
<g transform="translate(614 1466) scale(1) translate(-12 -12)"><path d="M0.8 19.8 L8.7 11.5 L9.1 3.4 L10.9 0.9 L17.5 0.6 L14.8 2.4 L14.8 8.7 L19.8 8.7 L23 6.3 L23.3 12.3 L21 15 L14.7 15.4 L6.3 23 Q3.6 25 1.3 23 Q-0.8 21.4 0.8 19.8 Z" fill="none" stroke="#4f7896" stroke-width="2" stroke-linejoin="round"/></g>
<rect x="0" y="1688" width="366" height="32" fill="#e3eaf1"/>
<rect x="0" y="1720" width="368" height="2" fill="#8d9ea6"/>
<rect x="32" y="1688" width="2" height="34" fill="#8d9ea6"/>
<rect x="366" y="1688" width="2" height="34" fill="#8d9ea6"/>
<circle cx="16" cy="1704" r="12" fill="#557b98"/>
<path d="M11.9 1699.9 L20.1 1708.1 M20.1 1699.9 L11.9 1708.1" stroke="#e1e8ee" stroke-width="4.8" stroke-linecap="round"/>
<rect x="40" y="1694" width="10" height="20" fill="#008000"/><rect x="50" y="1694" width="10" height="20" fill="#fb0000"/>
<text x="69" y="1712" font-size="23.5" fill="#000" text-anchor="start" textLength="261" lengthAdjust="spacingAndGlyphs" >TwoBarChartDailyWeekly</text>
<g transform="translate(348 1704) scale(1) translate(-12 -12)"><path d="M0.8 19.8 L8.7 11.5 L9.1 3.4 L10.9 0.9 L17.5 0.6 L14.8 2.4 L14.8 8.7 L19.8 8.7 L23 6.3 L23.3 12.3 L21 15 L14.7 15.4 L6.3 23 Q3.6 25 1.3 23 Q-0.8 21.4 0.8 19.8 Z" fill="none" stroke="#4f7896" stroke-width="2" stroke-linejoin="round"/></g>
</svg></body></html>
